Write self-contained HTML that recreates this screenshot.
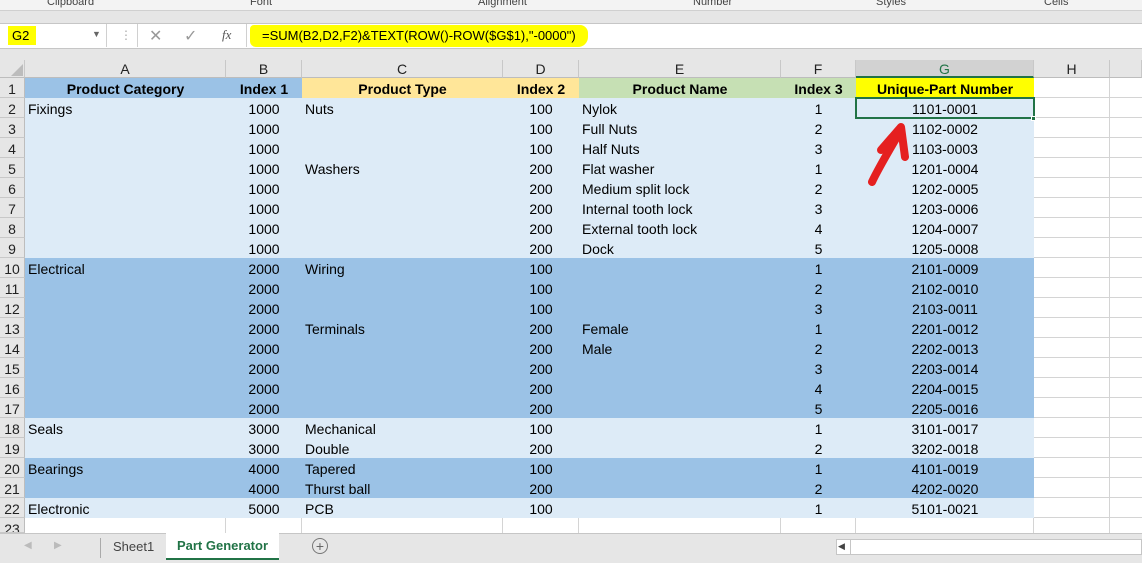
<!DOCTYPE html>
<html><head><style>
*{margin:0;padding:0;box-sizing:border-box}
body{width:1142px;height:563px;overflow:hidden;background:#e6e6e6;font-family:"Liberation Sans",Arial,sans-serif;font-size:14px;color:#000;position:relative}
.a{position:absolute}
.c{position:absolute;height:20px;line-height:23px;white-space:nowrap;overflow:hidden}
.ctr{text-align:center}
.rh{position:absolute;left:0;width:25px;height:20px;line-height:22px;text-align:center;background:#e6e6e6;border-bottom:1px solid #c8c8c8;border-right:1px solid #bdbdbd;color:#222;font-size:14px}
.ch{position:absolute;top:60px;height:18px;line-height:19px;text-align:center;background:#e6e6e6;border-right:1px solid #c8c8c8;border-bottom:1px solid #bdbdbd;color:#222}
</style></head><body>
<div class="a" style="left:0;top:0;width:1142px;height:11px;background:#f3f3f3;border-bottom:1px solid #d0d0d0;overflow:hidden;font-size:11px;line-height:7px;color:#444">
<span class="a" style="left:47px;top:-1px">Clipboard</span><span class="a" style="left:250px;top:-1px">Font</span><span class="a" style="left:478px;top:-1px">Alignment</span><span class="a" style="left:693px;top:-1px">Number</span><span class="a" style="left:876px;top:-1px">Styles</span><span class="a" style="left:1044px;top:-1px">Cells</span>
</div>
<div class="a" style="left:0;top:23px;width:1142px;height:26px;background:#fff;border-top:1px solid #c6c6c6;border-bottom:1px solid #c6c6c6"></div>
<div class="a" style="left:5px;top:24px;width:102px;height:23px;background:#fff;border-right:1px solid #d0d0d0"></div>
<div class="a" style="left:8px;top:26px;width:28px;height:19px;background:#ffff00;font-size:13px;line-height:19px;padding-left:4px">G2</div>
<div class="a" style="left:92px;top:29px;font-size:9px;color:#666">▼</div>
<div class="a" style="left:120px;top:28px;color:#aaa;font-size:12px">⋮</div>
<div class="a" style="left:137px;top:24px;width:110px;height:23px;background:#fff;border-right:1px solid #d0d0d0;border-left:1px solid #d0d0d0"></div>
<div class="a" style="left:149px;top:26px;color:#999;font-size:16px">✕</div>
<div class="a" style="left:184px;top:26px;color:#999;font-size:16px">✓</div>
<div class="a" style="left:222px;top:27px;color:#555;font-style:italic;font-family:'Liberation Serif',serif;font-size:13px">fx</div>
<div class="a" style="left:250px;top:25px;width:338px;height:22px;background:#ffff00;border-radius:4px 8px 10px 6px"></div>
<div class="a" style="left:262px;top:27px;font-size:13px;line-height:18px">=SUM(B2,D2,F2)&amp;TEXT(ROW()-ROW($G$1),"-0000")</div>
<div class="a" style="left:0;top:60px;width:1142px;height:473px;background:#fff"></div>
<div class="ch" style="left:0;width:25px;background:#e6e6e6"><svg width="12" height="12" style="position:absolute;left:11px;top:4px"><path d="M12 0L12 12L0 12Z" fill="#bcbcbc"/></svg></div>
<div class="ch" style="left:25px;width:201px">A</div>
<div class="ch" style="left:226px;width:76px">B</div>
<div class="ch" style="left:302px;width:201px">C</div>
<div class="ch" style="left:503px;width:76px">D</div>
<div class="ch" style="left:579px;width:202px">E</div>
<div class="ch" style="left:781px;width:75px">F</div>
<div class="ch" style="left:856px;width:178px;background:#d2d2d2;border-bottom:2px solid #217346;color:#217346">G</div>
<div class="ch" style="left:1034px;width:76px">H</div>
<div class="ch" style="left:1110px;width:32px"></div>
<div class="a" style="left:1034px;top:78px;width:108px;height:455px;background:repeating-linear-gradient(to bottom,transparent 0 19px,#d4d4d4 19px 20px)"></div>
<div class="a" style="left:1109px;top:78px;width:1px;height:455px;background:#d4d4d4"></div>
<div class="a" style="left:1033px;top:518px;width:1px;height:15px;background:#d4d4d4"></div>
<div class="a" style="left:225px;top:518px;width:1px;height:15px;background:#d4d4d4"></div>
<div class="a" style="left:301px;top:518px;width:1px;height:15px;background:#d4d4d4"></div>
<div class="a" style="left:502px;top:518px;width:1px;height:15px;background:#d4d4d4"></div>
<div class="a" style="left:578px;top:518px;width:1px;height:15px;background:#d4d4d4"></div>
<div class="a" style="left:780px;top:518px;width:1px;height:15px;background:#d4d4d4"></div>
<div class="a" style="left:855px;top:518px;width:1px;height:15px;background:#d4d4d4"></div>
<div class="rh" style="top:78px">1</div>
<div class="c ctr" style="top:78px;left:25px;width:201px;background:#9bc2e6;font-weight:bold">Product Category</div>
<div class="c ctr" style="top:78px;left:226px;width:76px;background:#9bc2e6;font-weight:bold">Index 1</div>
<div class="c ctr" style="top:78px;left:302px;width:201px;background:#ffe699;font-weight:bold">Product Type</div>
<div class="c ctr" style="top:78px;left:503px;width:76px;background:#ffe699;font-weight:bold">Index 2</div>
<div class="c ctr" style="top:78px;left:579px;width:202px;background:#c6e0b4;font-weight:bold">Product Name</div>
<div class="c ctr" style="top:78px;left:781px;width:75px;background:#c6e0b4;font-weight:bold">Index 3</div>
<div class="c ctr" style="top:78px;left:856px;width:178px;background:#ffff00;font-weight:bold">Unique-Part Number</div>
<div id="rows"></div>
<div class="rh" style="top:518px;height:15px;line-height:22px;overflow:hidden">23</div>
<div class="a" style="left:855px;top:97px;width:180px;height:22px;border:2px solid #217346"></div>
<div class="a" style="left:1031px;top:116px;width:5px;height:5px;background:#217346;border:1px solid #fff"></div>
<svg class="a" style="left:860px;top:115px" width="60" height="75"><path d="M12 67 C19 52,30 34,41 15" stroke="#e52020" stroke-width="8" stroke-linecap="round" fill="none"/><path d="M21 35 L41 12 L45 42" stroke="#e52020" stroke-width="8" stroke-linecap="round" stroke-linejoin="round" fill="none"/></svg>
<div class="a" style="left:0;top:533px;width:1142px;height:30px;background:#e6e6e6;border-top:1px solid #c6c6c6"></div>
<div class="a" style="left:24px;top:540px;color:#bbb;font-size:10px">◀</div>
<div class="a" style="left:54px;top:540px;color:#bbb;font-size:10px">▶</div>
<div class="a" style="left:100px;top:538px;width:1px;height:20px;background:#aaa"></div>
<div class="a" style="left:113px;top:538px;color:#444;line-height:18px;font-size:13px">Sheet1</div>
<div class="a" style="left:166px;top:533px;width:113px;height:27px;background:#fff;border-bottom:2px solid #217346;text-align:center;line-height:26px;color:#217346;font-weight:bold;font-size:13px">Part Generator</div>
<div class="a" style="left:312px;top:538px;width:16px;height:16px;border:1px solid #777;border-radius:50%;text-align:center;line-height:14px;color:#666;font-size:14px">+</div>
<div class="a" style="left:836px;top:539px;width:306px;height:16px;background:#fff;border:1px solid #c6c6c6"></div>
<div class="a" style="left:838px;top:541px;font-size:9px;color:#444">◀</div>
<div class="a" style="left:850px;top:539px;width:1px;height:16px;background:#c6c6c6"></div>
<script>
var d=[
["Fixings","1000","Nuts","100","Nylok","1","1101-0001",0],
["","1000","","100","Full Nuts","2","1102-0002",0],
["","1000","","100","Half Nuts","3","1103-0003",0],
["","1000","Washers","200","Flat washer","1","1201-0004",0],
["","1000","","200","Medium split lock","2","1202-0005",0],
["","1000","","200","Internal tooth lock","3","1203-0006",0],
["","1000","","200","External tooth lock","4","1204-0007",0],
["","1000","","200","Dock","5","1205-0008",0],
["Electrical","2000","Wiring","100","","1","2101-0009",1],
["","2000","","100","","2","2102-0010",1],
["","2000","","100","","3","2103-0011",1],
["","2000","Terminals","200","Female","1","2201-0012",1],
["","2000","","200","Male","2","2202-0013",1],
["","2000","","200","","3","2203-0014",1],
["","2000","","200","","4","2204-0015",1],
["","2000","","200","","5","2205-0016",1],
["Seals","3000","Mechanical","100","","1","3101-0017",0],
["","3000","Double","200","","2","3202-0018",0],
["Bearings","4000","Tapered","100","","1","4101-0019",1],
["","4000","Thurst ball","200","","2","4202-0020",1],
["Electronic","5000","PCB","100","","1","5101-0021",0]];
var L=[25,226,302,503,579,781,856,1034],h="";
d.forEach(function(r,i){var t=98+i*20,bg=r[7]?"#9bc2e6":"#ddebf7";
h+='<div class="rh" style="top:'+t+'px">'+(i+2)+'</div>';
h+='<div class="c" style="top:'+t+'px;left:25px;width:1009px;background:'+bg+'"></div>';
for(var k=0;k<7;k++){var ctr=(k%2==1||k==6);
h+='<div class="c'+(ctr?' ctr':'')+'" style="top:'+t+'px;left:'+(L[k]+(ctr?0:3))+'px;width:'+(L[k+1]-L[k]-(ctr?0:3))+'px">'+r[k]+'</div>';}
});
document.getElementById("rows").outerHTML=h;
</script>
</body></html>
